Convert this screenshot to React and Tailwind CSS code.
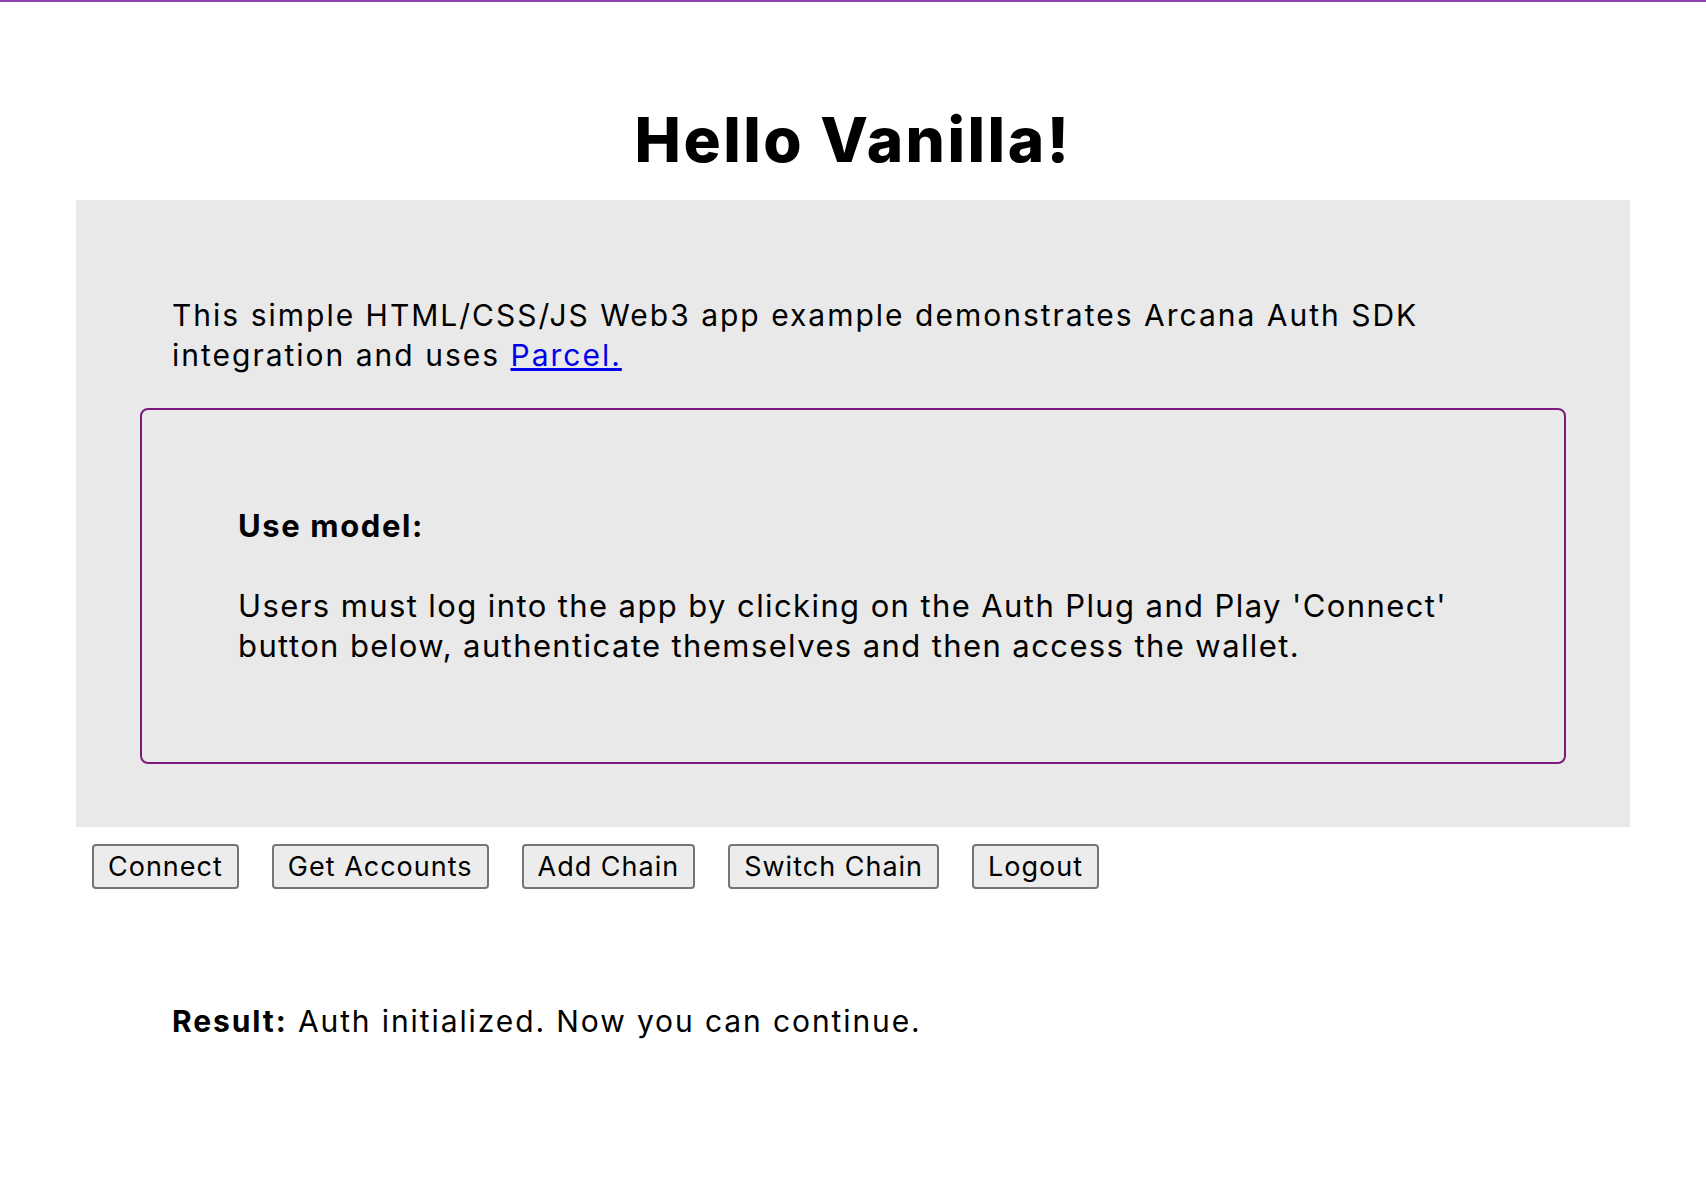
const buttons = ['Connect', 'Get Accounts', 'Add Chain', 'Switch Chain', 'Logout']

export default function App() {
  return (
    <div className="min-h-[1188px] border-t-2 border-[#8e44ad] bg-white text-black font-['Inter','Open_Sans',sans-serif]">
      <h1 className="pt-[107px] text-center text-[62px] font-extrabold leading-none tracking-[2.5px]">
        Hello Vanilla!
      </h1>

      <section className="mx-[76px] mt-[29px] bg-[#e9e9e9] pt-[95px] pb-[63px]">
        <p className="px-[96px] text-[30px] leading-[40px] tracking-[2px]">
          This simple HTML/CSS/JS Web3 app example demonstrates Arcana Auth SDK integration and uses{' '}
          <a href="#" className="text-[#0000ee] underline">Parcel.</a>
        </p>

        <div className="mx-[64px] mt-[33px] rounded-lg border-2 border-[#7a1a7f] pt-[96px] pb-[96px] px-[96px]">
          <h3 className="text-[31px] font-bold leading-[40px] tracking-[1.6px]">Use model:</h3>
          <p className="mt-[40px] text-[31px] leading-[40px] tracking-[1.4px]">
            Users must log into the app by clicking on the Auth Plug and Play 'Connect' button below, authenticate themselves and then access the wallet.
          </p>
        </div>
      </section>

      <div className="mx-[76px] mt-[17px] flex gap-[33px] pl-[16px]">
        {buttons.map((b) => (
          <button
            key={b}
            className="h-[45px] rounded-[4px] border-2 border-[#767676] bg-[#ececec] px-[14px] text-[27px] leading-none tracking-[1px]"
          >
            {b}
          </button>
        ))}
      </div>

      <p className="mt-[112px] pl-[172px] text-[30px] leading-[40px] tracking-[1.9px]">
        <span className="font-bold">Result:</span> Auth initialized. Now you can continue.
      </p>
    </div>
  )
}
